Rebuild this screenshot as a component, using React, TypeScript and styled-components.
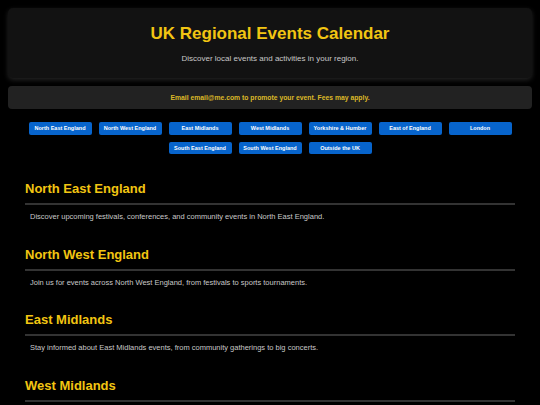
import styled, { createGlobalStyle } from 'styled-components';

const regions = [
  'North East England',
  'North West England',
  'East Midlands',
  'West Midlands',
  'Yorkshire & Humber',
  'East of England',
  'London',
  'South East England',
  'South West England',
  'Outside the UK',
];

const sections = [
  {
    title: 'North East England',
    text: 'Discover upcoming festivals, conferences, and community events in North East England.',
  },
  {
    title: 'North West England',
    text: 'Join us for events across North West England, from festivals to sports tournaments.',
  },
  {
    title: 'East Midlands',
    text: 'Stay informed about East Midlands events, from community gatherings to big concerts.',
  },
  {
    title: 'West Midlands',
    text: 'Explore what is happening across the West Midlands, from markets to live music.',
  },
];

const GlobalStyle = createGlobalStyle`
  html, body {
    margin: 0;
    padding: 0;
    background: #000;
    font-family: "Liberation Sans", Arial, sans-serif;
    overflow: hidden;
  }
`;

const App = () => {
  return (
    <>
      <GlobalStyle />
      <Page>
        <Header>
          <Title>UK Regional Events Calendar</Title>
          <Subtitle>Discover local events and activities in your region.</Subtitle>
        </Header>
        <Notice>Email email@me.com to promote your event. Fees may apply.</Notice>
        <Nav>
          {regions.map((r) => (
            <RegionButton key={r}>{r}</RegionButton>
          ))}
        </Nav>
        <Sections>
          {sections.map((s) => (
            <Section key={s.title}>
              <SectionTitle>{s.title}</SectionTitle>
              <SectionText>{s.text}</SectionText>
            </Section>
          ))}
        </Sections>
      </Page>
    </>
  );
};

const Page = styled.div`
  padding: 8px;
`;

const Header = styled.header`
  height: 70px;
  box-sizing: border-box;
  padding-top: 14px;
  background-color: #121212;
  border-radius: 5px;
  box-shadow: 0 2px 5px rgba(60, 60, 60, 0.6);
  text-align: center;
`;

const Title = styled.h1`
  margin: 0;
  font-size: 17px;
  line-height: 24px;
  font-weight: bold;
  color: #f2c512;
`;

const Subtitle = styled.p`
  margin: 8px 0 0;
  font-size: 8px;
  line-height: 10px;
  color: #c8c8c8;
`;

const Notice = styled.div`
  margin-top: 8px;
  height: 23px;
  display: flex;
  align-items: center;
  justify-content: center;
  background-color: #222;
  border-radius: 4px;
  font-size: 6.8px;
  font-weight: bold;
  color: #dcb928;
`;

const Nav = styled.nav`
  margin-top: 13px;
  display: flex;
  flex-wrap: wrap;
  justify-content: center;
  gap: 7px;
  padding: 0 12px;
`;

const RegionButton = styled.button`
  width: 63px;
  height: 12.5px;
  padding: 0;
  border: none;
  border-radius: 2px;
  background-color: #0764cc;
  color: #fff;
  font-family: "Liberation Sans", Arial, sans-serif;
  font-size: 5.5px;
  font-weight: bold;
  cursor: pointer;
`;

const Sections = styled.main`
  margin-top: 26px;
  padding: 0 17px;
`;

const Section = styled.section`
  margin-bottom: 23.7px;
`;

const SectionTitle = styled.h2`
  margin: 0;
  padding-bottom: 5px;
  font-size: 13px;
  line-height: 18px;
  font-weight: bold;
  color: #f2c512;
  border-bottom: 2px solid #333;
`;

const SectionText = styled.p`
  margin: 7px 0 0 5px;
  font-size: 7.5px;
  line-height: 10px;
  color: #c8c8c8;
`;

export default App;
